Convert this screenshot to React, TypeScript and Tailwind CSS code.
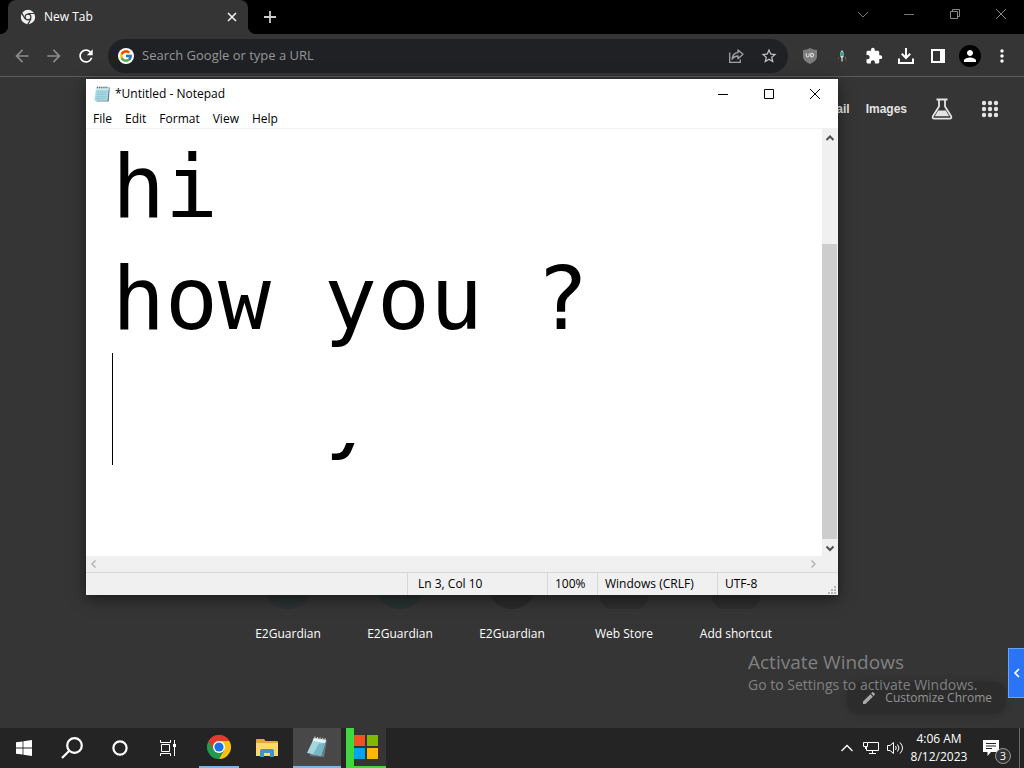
import { useState } from "react";
import type { ReactNode } from "react";
import clsx from "clsx";
import { FcGoogle } from "react-icons/fc";
import {
  MdArrowBack,
  MdArrowForward,
  MdExtension,
  MdModeEdit,
  MdMoreVert,
  MdPerson,
  MdRefresh,
  MdStarBorder,
} from "react-icons/md";

const SHORTCUTS = [
  { label: "E2Guardian", tint: "rounded-full bg-[#2b3231]" },
  { label: "E2Guardian", tint: "rounded-full bg-[#293231]" },
  { label: "E2Guardian", tint: "rounded-full bg-[#2b2b2b]" },
  { label: "Web Store", tint: "rounded-xl bg-[#2e2e2e]" },
  { label: "Add shortcut", tint: "rounded-xl bg-[#2e2e2e]" },
];

const MENUS = ["File", "Edit", "Format", "View", "Help"];

function ChromeMono() {
  return (
    <svg viewBox="0 0 16 16" className="h-4 w-4">
      <circle cx="8" cy="8" r="7.2" fill="#f1f1f1" />
      <circle cx="8" cy="8" r="3.5" fill="#353535" />
      <circle cx="8" cy="8" r="2.3" fill="#f1f1f1" />
      <path d="M8 4.5h6.6M5 9.8 1.8 4.1M11 9.8 7.8 15.4" stroke="#353535" strokeWidth="1.2" />
    </svg>
  );
}

function ChromeColor() {
  return (
    <svg viewBox="0 0 24 24" className="h-6 w-6">
      <path d="M12 12 1.6 6A12 12 0 0 1 22.4 6Z" fill="#e33b2e" />
      <path d="M12 12 1.6 6A12 12 0 0 0 12 24l5.2-9Z" fill="#229a4b" />
      <path d="M12 12 17.2 15 12 24A12 12 0 0 0 22.4 6H12Z" fill="#fbc116" />
      <path d="M1.6 6 6.8 15 12 12 12 6H22.4A12 12 0 0 0 1.6 6Z" fill="#e33b2e" />
      <circle cx="12" cy="12" r="6" fill="#fff" />
      <circle cx="12" cy="12" r="4.6" fill="#1a73e8" />
    </svg>
  );
}

function NotepadIcon({ className }: { className?: string }) {
  return (
    <svg viewBox="0 0 16 16" className={className}>
      <path d="M3.2 1.6h12.6l-1 14H2.6Z" fill="#6d868f" />
      <path d="M2.2 1.6h12.600L13.400 14.8H.4Z" fill="#a8d8e2" />
      <path d="M2.2 1.6h12.600l-.3 2.200h-12.600Z" fill="#dff3f6" />
      <path d="M3 6.200h9.600M2.700 8.400h9.600M2.400 10.600H12M2.100 12.600h9.600" stroke="#7dbccb" strokeWidth=".6" />
      <path d="M3.400.6v1.800M5.300.6v1.800M7.200.6v1.800M9.100.6v1.800M11 .6v1.800M12.900.6v1.800" stroke="#46565c" strokeWidth=".9" />
    </svg>
  );
}

function TaskNotepad() {
  return (
    <svg viewBox="0 0 24 24" className="h-6 w-6">
      <path d="M8 3 22 5 19 22 5 21Z" fill="#6a7c80" />
      <path d="M9 3 21 5 16 21 2 18Z" fill="#a4d6df" />
      <path d="M9 3 21 5 20 8 8 6Z" fill="#e6f5f6" />
      <path d="M14 8.5 20 8l-4 13-8-1.7Z" fill="#5fa7b8" opacity=".65" />
      <path d="m10 1.6-.4 2.6M12.6 2l-.4 2.6M15.2 2.4l-.4 2.6M17.8 2.8l-.4 2.6M20.2 3.2l-.4 2.6" stroke="#d9d9d9" strokeWidth="1" />
    </svg>
  );
}

function ShareIcon() {
  return (
    <svg viewBox="0 0 16 16" className="h-4 w-4" fill="none" stroke="#a0a3a7" strokeWidth="1.3">
      <path d="M1.7 4.6v9.7h10.6v-2.8" />
      <path d="M10 2v2.6C6.3 4.9 4.4 7.2 4 11c1.6-2.2 3.4-3 6-3v2.7L15 6.3Z" strokeLinejoin="round" />
    </svg>
  );
}

function ShieldIcon() {
  return (
    <svg viewBox="0 0 16 18" className="h-[18px] w-4">
      <path d="M8 1c2 1.3 4.3 1.9 7 2v6c0 4-3 6-7 8-4-2-7-4-7-8V3c2.7-.1 5-.7 7-2Z" fill="#7d7d7d" />
      <path d="M4.3 6.4v2.3q0 1.2 1.400 1.200t1.400-1.200V6.400M8.800 6.400v3.500h1q1.900 0 1.900-1.750t-1.900-1.750Z" fill="none" stroke="#eee" strokeWidth="1" />
    </svg>
  );
}

function PenIcon() {
  return (
    <svg viewBox="0 0 16 16" className="h-4 w-4">
      <path d="M6.300 4.500 8 2l1.700 2.500v4L8.600 10v3.500H7.400V10L6.300 8.500Z" fill="#d5dddd" />
      <path d="M6.300 4h3.400v4H6.300Z" fill="#38a394" />
      <path d="M4.500 9v2.500M12 11v2.500" stroke="#8c3535" strokeWidth="1" />
      <path d="M11.500 9v2" stroke="#3f8d4e" strokeWidth="1" />
    </svg>
  );
}

function DownloadIcon() {
  return (
    <svg viewBox="0 0 16 16" className="h-4 w-4" fill="none" stroke="#fff" strokeWidth="2">
      <path d="M8 0v9M3.800 5.800 8 10l4.200-4.200M1 10.500V15h14v-4.500" />
    </svg>
  );
}

function PanelIcon() {
  return (
    <svg viewBox="0 0 14 14" className="h-3.5 w-3.5">
      <path d="M0 0h14v14H0ZM2 2v10h7V2Z" fill="#fff" fillRule="evenodd" />
    </svg>
  );
}

function FlaskIcon() {
  return (
    <svg viewBox="0 0 22 22" className="h-[22px] w-[22px]" fill="none" stroke="#e4e4e4" strokeWidth="1.8">
      <path d="M5.500 1.500h11M8 2v6.500L2 18q-1.200 2.700 1.500 2.700h15Q21.200 20.700 20 18l-6-9.500V2" strokeLinejoin="round" />
      <path d="M7.200 12.500h7.600l3.400 5.800H3.800Z" fill="#e4e4e4" stroke="none" />
    </svg>
  );
}

function Lines({ d, color }: { d: string; color: string }) {
  return (
    <svg viewBox="0 0 12 12" className="h-3 w-3" fill="none" stroke={color}>
      <path d={d} />
    </svg>
  );
}

function IconButton({ label, className, children }: { label: string; className?: string; children: ReactNode }) {
  return (
    <button type="button" aria-label={label} className={clsx("flex shrink-0 items-center", className ?? "justify-center")}>
      {children}
    </button>
  );
}

function TabStrip() {
  return (
    <div className="flex h-[34px] shrink-0 items-stretch bg-black">
      <div className="relative ml-2 flex w-60 items-center gap-2 rounded-t-lg bg-[#353535] pl-3 pr-2.5 text-white">
        <span className="absolute bottom-0 -left-2 h-2 w-2 bg-[radial-gradient(circle_at_0_0,#000_8px,#353535_8px)]" />
        <span className="absolute -right-2 bottom-0 h-2 w-2 bg-[radial-gradient(circle_at_100%_0,#000_8px,#353535_8px)]" />
        <ChromeMono />
        <span className="flex-1 text-xs">New Tab</span>
        <IconButton label="Close tab">
          <svg viewBox="0 0 12 12" className="h-3 w-3" stroke="#f1f1f1" strokeWidth="1.600">
            <path d="M2 2l8 8M10 2l-8 8" />
          </svg>
        </IconButton>
      </div>
      <IconButton label="New tab" className="ml-4 w-3 justify-center">
        <svg viewBox="0 0 12 12" className="h-3 w-3" stroke="#ccc" strokeWidth="1.800">
          <path d="M6 0v12M0 6h12" />
        </svg>
      </IconButton>
      <div className="ml-auto flex pb-1.5">
        <IconButton label="Search tabs" className="w-[46px] justify-center">
          <Lines d="M1 4l5 5 5-5" color="#777" />
        </IconButton>
        <IconButton label="Minimize" className="w-[46px] justify-center">
          <Lines d="M1 6.5h10" color="#777" />
        </IconButton>
        <IconButton label="Restore" className="w-[46px] justify-center">
          <Lines d="M1.5 3.5h7v7h-7ZM3.5 3.5v-2h7v7h-2" color="#888" />
        </IconButton>
        <IconButton label="Close" className="w-[46px] justify-center">
          <Lines d="M1 1l10 10M11 1L1 11" color="#888" />
        </IconButton>
      </div>
    </div>
  );
}

function Toolbar() {
  return (
    <div className="flex h-[43px] shrink-0 items-center border-b border-[#5c5c5c] bg-[#353535] pt-px pr-3.5">
      <div className="flex gap-3 pl-3">
        <IconButton label="Back">
          <MdArrowBack className="h-5 w-5 text-[#8a8a8a]" />
        </IconButton>
        <IconButton label="Forward">
          <MdArrowForward className="h-5 w-5 text-[#8a8a8a]" />
        </IconButton>
        <IconButton label="Reload">
          <MdRefresh className="h-5 w-5 text-white" />
        </IconButton>
      </div>
      <div className="ml-3 flex h-[34px] flex-1 items-center gap-4 rounded-full bg-[#202124] px-2.5">
        <span className="-mr-2 flex h-4 w-4 items-center justify-center rounded-full bg-white">
          <FcGoogle className="h-3.5 w-3.5" />
        </span>
        <input
          aria-label="Address and search bar"
          placeholder="Search Google or type a URL"
          className="min-w-0 flex-1 bg-transparent text-[13px] outline-none placeholder:text-[#949699]"
        />
        <IconButton label="Share">
          <ShareIcon />
        </IconButton>
        <IconButton label="Bookmark">
          <MdStarBorder className="h-[18px] w-[18px] text-[#c4c6c9]" />
        </IconButton>
      </div>
      <div className="ml-1.5 flex">
        <IconButton label="uBlock" className="w-8 justify-center"><ShieldIcon /></IconButton>
        <IconButton label="Pen" className="w-8 justify-center"><PenIcon /></IconButton>
        <IconButton label="Extensions" className="w-8 justify-center">
          <MdExtension className="h-[18px] w-[18px] text-white" />
        </IconButton>
        <IconButton label="Downloads" className="w-8 justify-center"><DownloadIcon /></IconButton>
        <IconButton label="Side panel" className="w-8 justify-center"><PanelIcon /></IconButton>
        <IconButton label="Profile" className="w-8 justify-center">
          <span className="flex h-[22px] w-[22px] items-center justify-center rounded-full bg-black">
            <MdPerson className="h-[18px] w-[18px] text-white" />
          </span>
        </IconButton>
        <IconButton label="Menu" className="-mr-2 w-8 justify-center"><MdMoreVert className="h-5 w-5 text-white" /></IconButton>
      </div>
    </div>
  );
}

function NewTabPage() {
  return (
    <main className="relative flex min-h-0 flex-1 flex-col bg-[#353535] text-white">
      <header className="flex h-16 shrink-0 items-center justify-end pr-[25px] font-['Liberation_Sans',Arial,sans-serif] text-xs font-bold text-[#e4e4e4]">
        <a href="#gmail">Gmail</a>
        <a href="#images" className="ml-4">Images</a>
        <IconButton label="Search Labs" className="ml-6"><FlaskIcon /></IconButton>
        <IconButton label="Google apps" className="ml-7">
          <svg viewBox="0 0 18 18" className="h-[18px] w-[18px]" fill="#e4e4e4">
            {[3, 9, 15].map((y) => [3, 9, 15].map((x) => <circle key={`${x}-${y}`} cx={x} cy={y} r="2.2" />))}
          </svg>
        </IconButton>
      </header>
      <nav className="mx-auto mt-auto flex pb-[85px]">
        {SHORTCUTS.map((s, index) => (
          <a key={index} href="#shortcut" className="flex w-28 flex-col items-center gap-4">
            <span className={clsx("h-12 w-12", s.tint)} />
            <span className="text-xs leading-[18px]">{s.label}</span>
          </a>
        ))}
      </nav>
      <button
        type="button"
        className="absolute right-[18px] bottom-3.5 flex h-8 items-center gap-2 rounded-xl bg-[#2c2c2c] px-3.5 text-xs text-[#949494] shadow-[0_0_6px_#2c2c2c]"
      >
        <MdModeEdit className="h-4 w-4 text-[#a8a8a8]" />
        Customize Chrome
      </button>
      <div className="pointer-events-none absolute right-10 bottom-8 w-[236px] text-[#818181]">
        <p className="text-[19px] leading-6">Activate Windows</p>
        <p className="text-sm leading-[22px] whitespace-nowrap">Go to Settings to activate Windows.</p>
      </div>
      <button
        type="button"
        aria-label="Expand panel"
        className="absolute right-0 bottom-[30px] flex h-[50px] w-4 items-center justify-center border border-r-0 border-[#6aa2ff] bg-[#2a74f5]"
      >
        <svg viewBox="0 0 8 10" className="h-2.5 w-2" fill="none" stroke="#fff" strokeWidth="1.6">
          <path d="M6 1 2 5l4 4" />
        </svg>
      </button>
    </main>
  );
}

function StatusCell({ className, children }: { className?: string; children?: ReactNode }) {
  return <div className={clsx("flex items-center border-l border-[#d7d7d7]", className)}>{children}</div>;
}

function NotepadWindow() {
  const [text, setText] = useState("hi\nhow you ?\n");

  return (
    <section className="absolute top-[79px] left-[86px] flex h-[516px] w-[752px] flex-col bg-white text-xs text-black shadow-[0_4px_14px_rgba(0,0,0,0.5)]">
      <div className="flex h-[29px] shrink-0 items-center pl-2">
        <NotepadIcon className="h-4 w-4" />
        <h1 className="ml-[5px] flex-1">*Untitled - Notepad</h1>
        <IconButton label="Minimize" className="h-full w-[46px] justify-center">
          <Lines d="M1 6.5h10" color="#000" />
        </IconButton>
        <IconButton label="Maximize" className="h-full w-[46px] justify-center">
          <Lines d="M1.5 1.5h9v9h-9Z" color="#000" />
        </IconButton>
        <IconButton label="Close" className="h-full w-[46px] justify-center">
          <Lines d="M1 1l10 10M11 1L1 11" color="#000" />
        </IconButton>
      </div>
      <div className="flex h-[21px] shrink-0 items-center gap-[13px] border-b border-[#f0f0f0] pt-0.5 pl-[7px]">
        {MENUS.map((m) => (
          <button key={m} type="button">{m}</button>
        ))}
      </div>
      <div className="flex min-h-0 flex-1">
        <div className="relative min-w-0 flex-1">
          <textarea
            aria-label="Text editor"
            value={text}
            onChange={(e) => setText(e.target.value)}
            spellCheck={false}
            className="h-full w-full resize-none overflow-hidden pt-0.5 pl-[26px] font-['DejaVu_Sans_Mono',monospace] text-[88px] leading-[112px] whitespace-pre outline-none"
          />
          <span className="absolute top-56 left-[26px] h-28 w-px bg-black" />
          {/* leftover descender from a stale repaint */}
          <span
            aria-hidden="true"
            className="absolute top-[314px] left-[238px] flex h-5 items-end overflow-hidden font-['DejaVu_Sans_Mono',monospace] text-[88px] leading-[102px]"
          >
            y
          </span>
        </div>
        <div className="flex w-4 flex-col items-center bg-[#f0f0f0]">
          <IconButton label="Scroll up" className="h-[17px] w-full justify-center">
            <svg viewBox="0 0 10 10" className="h-2.5 w-2.5" fill="none" stroke="#505050" strokeWidth="2">
              <path d="M1.500 7 5 3.500 8.500 7" />
            </svg>
          </IconButton>
          <div className="flex w-full flex-1 items-end pr-px">
            <div className="h-3/4 w-full bg-[#cdcdcd]" />
          </div>
          <IconButton label="Scroll down" className="h-[17px] w-full justify-center">
            <svg viewBox="0 0 10 10" className="h-2.5 w-2.5" fill="none" stroke="#505050" strokeWidth="2">
              <path d="M1.500 3.500 5 7l3.500-3.500" />
            </svg>
          </IconButton>
        </div>
      </div>
      <div className="flex h-4 shrink-0 items-center justify-between bg-[#f0f0f0] pr-5 pl-[3px]">
        <IconButton label="Scroll left">
          <svg viewBox="0 0 10 10" className="h-2.5 w-2.5" fill="none" stroke="#b4b4b4" strokeWidth="1.5">
            <path d="M6.500 1.500 3 5l3.500 3.500" />
          </svg>
        </IconButton>
        <IconButton label="Scroll right">
          <svg viewBox="0 0 10 10" className="h-2.5 w-2.5" fill="none" stroke="#b4b4b4" strokeWidth="1.5">
            <path d="M3.500 1.500 7 5 3.500 8.500" />
          </svg>
        </IconButton>
      </div>
      <footer className="flex h-[23px] shrink-0 border-t border-[#d7d7d7] bg-[#f0f0f0]">
        <div className="flex-1" />
        <StatusCell className="w-[140px] pl-2.5">Ln 3, Col 10</StatusCell>
        <StatusCell className="w-[50px] pl-[7px]">100%</StatusCell>
        <StatusCell className="w-[120px] pl-[7px]">Windows (CRLF)</StatusCell>
        <StatusCell className="w-[121px] pl-[7px]">
          <span className="flex-1">UTF-8</span>
          <svg viewBox="0 0 10 10" className="mr-px h-2.5 w-2.5 self-end" fill="#b8b8b8">
            <path d="M7 1h2v2H7ZM4 4h2v2H4ZM7 4h2v2H7ZM1 7h2v2H1ZM4 7h2v2H4ZM7 7h2v2H7Z" />
          </svg>
        </StatusCell>
      </footer>
    </section>
  );
}

function Taskbar() {
  return (
    <footer className="flex h-10 shrink-0 bg-[#242424] text-xs text-white">
      <IconButton label="Start" className="w-12 justify-center">
        <svg viewBox="0 0 16 16" className="h-4 w-4" fill="#fff">
          <path d="M0 2.3 6.6 1.4v6.2H0ZM7.4 1.3 16 0v7.6H7.4ZM0 8.4h6.6v6.2L0 13.7ZM7.4 8.4H16V16l-8.600-1.300Z" />
        </svg>
      </IconButton>
      <IconButton label="Search" className="w-12 justify-center">
        <svg viewBox="0 0 22 22" className="h-[22px] w-[22px]" fill="none" stroke="#fff" strokeWidth="2.2">
          <circle cx="13.5" cy="8.5" r="7.3" />
          <path d="M8.300 13.700 1 21" />
        </svg>
      </IconButton>
      <IconButton label="Cortana" className="w-12 justify-center">
        <svg viewBox="0 0 16 16" className="h-4 w-4" fill="none" stroke="#fff" strokeWidth="2.2">
          <circle cx="8" cy="8" r="6.6" />
        </svg>
      </IconButton>
      <IconButton label="Task view" className="w-12 justify-center">
        <svg viewBox="0 0 16 16" className="h-4 w-4" fill="none" stroke="#fff">
          <path d="M.5 0v2.500h10V0M.5 16v-2.500h10V16M1.500 4.500h8v7h-8ZM14.500 0v16" />
          <path d="M13 4h3v3h-3Z" fill="#fff" stroke="none" />
        </svg>
      </IconButton>
      <IconButton label="Google Chrome" className="mx-[7px] w-10 justify-center border-b-2 border-[#76b9ed]">
        <ChromeColor />
      </IconButton>
      <IconButton label="File Explorer" className="w-[41px] justify-center">
        <svg viewBox="0 0 22 18" className="h-[18px] w-[22px]">
          <path d="M0 1q0-1 1-1h7l1.500 2H21q1 0 1 1v14H0Z" fill="#e5a93a" />
          <path d="M0 4h22v13H0Z" fill="#fbd96b" />
          <path d="M4 18v-6q0-2 2-2h10q2 0 2 2v6h-4v-4H8v4Z" fill="#3f93c9" />
        </svg>
      </IconButton>
      <IconButton label="Notepad" className="ml-1.5 w-12 justify-center border-b-2 border-[#76b9ed] bg-[#484848]">
        <TaskNotepad />
      </IconButton>
      <IconButton label="Microsoft" className="ml-[5px] w-10 border-b-2 border-l-8 border-[#3fd93f] bg-[#353535]">
        <svg viewBox="0 0 24 24" className="h-6 w-6 shrink-0">
          <path d="M0 0h11v11H0Z" fill="#f25022" />
          <path d="M13 0h11v11H13Z" fill="#7fba00" />
          <path d="M0 13h11v11H0Z" fill="#00a4ef" />
          <path d="M13 13h11v11H13Z" fill="#ffb900" />
        </svg>
      </IconButton>
      <div className="ml-auto flex items-center">
        <IconButton label="Hidden icons" className="w-6 justify-center">
          <svg viewBox="0 0 12 12" className="h-3 w-3" fill="none" stroke="#fff" strokeWidth="1.3">
            <path d="M.5 9 6 3.500 11.500 9" />
          </svg>
        </IconButton>
        <IconButton label="Network" className="w-6 justify-center">
          <svg viewBox="0 0 16 14" className="h-3.5 w-4" fill="none" stroke="#fff">
            <path d="M5 1.500h10.500v8H3.500V6M9.500 9.500v3M6 12.500h7M.5 1.500h4v4h-4ZM2.500 5.500V8" />
          </svg>
        </IconButton>
        <IconButton label="Volume" className="w-6 justify-center">
          <svg viewBox="0 0 17 14" className="h-3.5 w-[17px]" fill="none" stroke="#fff">
            <path d="M.5 4.500h2.500L6.500 1.500v11L3 9.500H.5ZM8.500 5q1.500 2 0 4M10.500 3.500q3 3.500 0 7M13 1.500q5 5.500 0 11" />
          </svg>
        </IconButton>
        <div className="w-16 text-center leading-[18px]">
          <p>4:06 AM</p>
          <p>8/12/2023</p>
        </div>
        <IconButton label="Notifications" className="relative ml-2 h-10 w-8 justify-center">
          <svg viewBox="0 0 16 16" className="mr-2 h-4 w-4">
            <path d="M0 0h16v12H8l-3.500 4v-4H0Z" fill="#fff" />
            <path d="M3 3.500h10M3 6h10M3 8.500h6" stroke="#242424" />
          </svg>
          <span className="absolute right-0 bottom-1 flex h-4 w-4 items-center justify-center rounded-full border border-[#999] bg-[#333] text-[11px]">3</span>
        </IconButton>
        <span className="ml-2 h-10 w-[5px] border-l border-[#6a6a6a]" />
      </div>
    </footer>
  );
}

export default function App() {
  return (
    <div className="relative flex h-screen flex-col overflow-hidden bg-[#353535] font-['Open_Sans','Noto_Sans',sans-serif]">
      <TabStrip />
      <Toolbar />
      <NewTabPage />
      <NotepadWindow />
      <Taskbar />
    </div>
  );
}
